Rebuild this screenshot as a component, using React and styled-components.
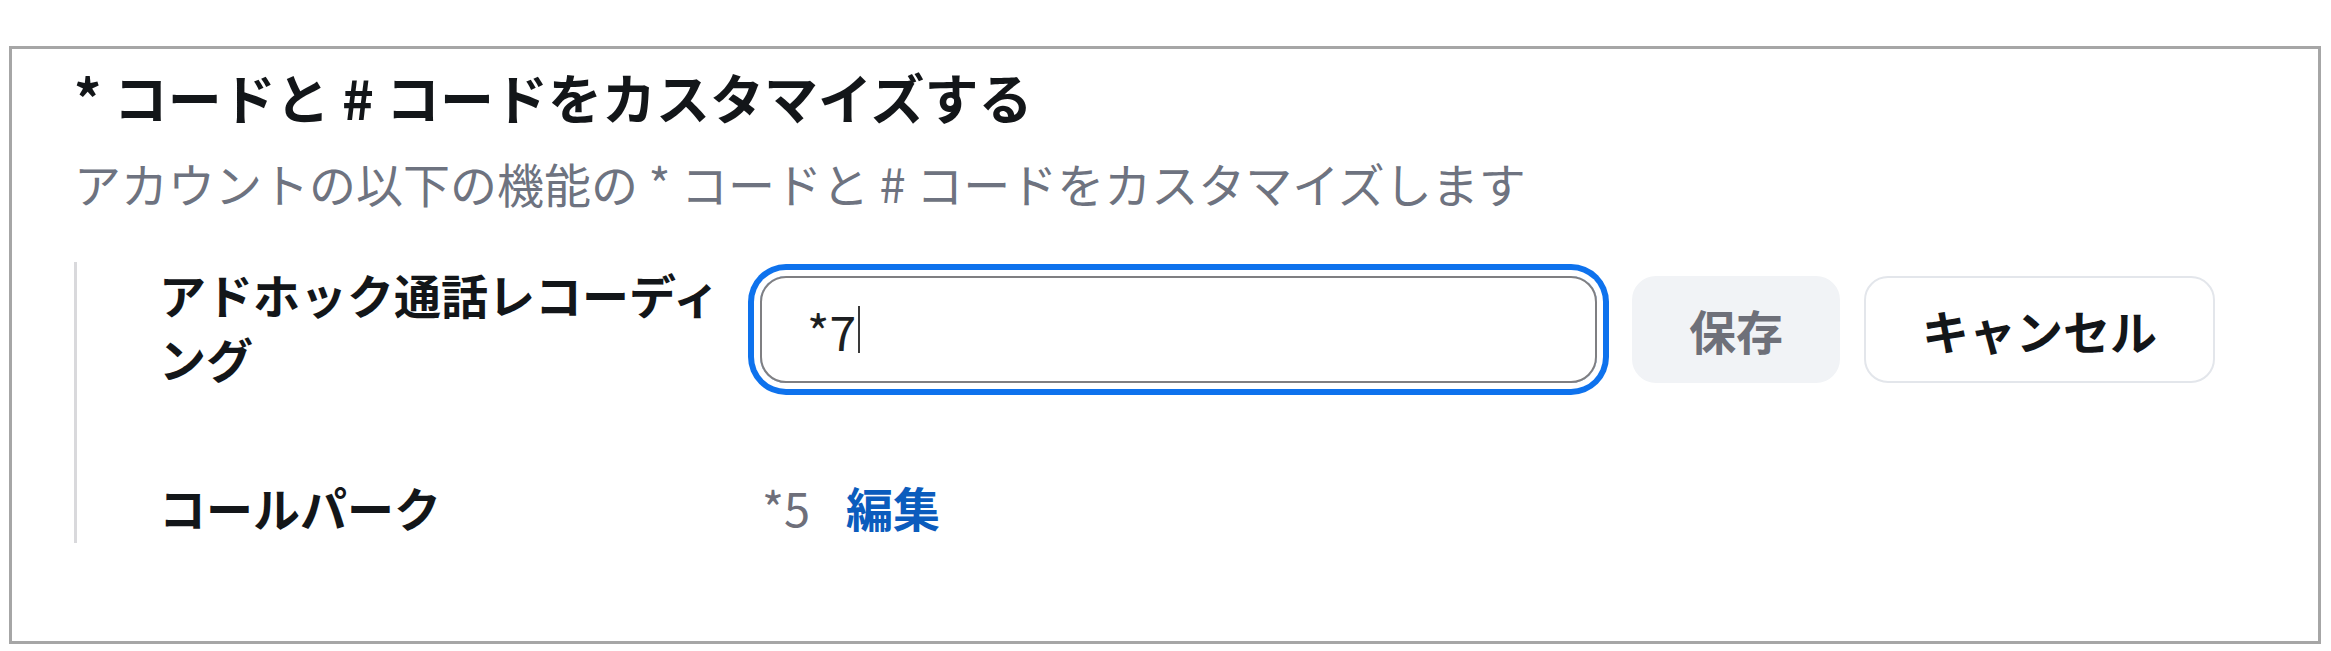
import React from "react";
import styled, { createGlobalStyle } from "styled-components";

const GlobalStyle = createGlobalStyle`
  html, body {
    margin: 0;
    padding: 0;
    background: #ffffff;
  }
  body {
    font-family: "Noto Sans CJK JP", "Noto Sans", sans-serif;
    color: #131619;
  }
`;

const codes = [
  { id: "adhoc", label: "アドホック通話レコーディング", value: "*7", editing: true },
  { id: "park", label: "コールパーク", value: "*5", editing: false },
];

const Frame = styled.div`
  margin: 46px 10px 7px 9px;
  border: 3px solid #a6a6a6;
  padding: 12px 0 98px 62px;
`;

const Title = styled.h2`
  margin: 0;
  font-size: 54px;
  line-height: 72px;
  font-weight: 700;
  color: #131619;
`;

const Subtitle = styled.p`
  margin: 18px 0 0;
  font-size: 47px;
  line-height: 64px;
  font-weight: 400;
  color: #6e7380;
`;

const Rows = styled.div`
  margin-top: 47px;
  border-left: 3px solid #d9d9dc;
  padding: 0 0 4px 82px;
  display: flex;
  flex-direction: column;
  gap: 85px;
`;

const Row = styled.div`
  display: flex;
  align-items: flex-start;
  gap: 21px;
`;

const Label = styled.div`
  width: 580px;
  flex-shrink: 0;
  font-size: 47px;
  line-height: 64px;
  font-weight: 700;
  color: #131619;
`;

const Editor = styled.div`
  margin-top: 14px;
  display: flex;
  align-items: center;
`;

const Field = styled.div`
  box-sizing: border-box;
  width: 837px;
  height: 107px;
  border: 2px solid #7f7f82;
  border-radius: 26px;
  padding-left: 45px;
  display: flex;
  align-items: center;
  font-size: 48px;
  color: #1d1f22;
  box-shadow: 0 0 0 6px #ffffff, 0 0 0 12px #0e72ed;
`;

const Caret = styled.span`
  display: inline-block;
  width: 2px;
  height: 47px;
  margin-left: 2px;
  background: #3a3a3a;
`;

const Button = styled.button`
  box-sizing: border-box;
  height: 107px;
  padding: 0 ${(p) => (p.$primary ? "55px" : "56px")};
  border-radius: 24px;
  font-family: inherit;
  font-size: 47px;
  font-weight: 700;
  margin-left: ${(p) => (p.$primary ? "35px" : "24px")};
  border: 2px solid ${(p) => (p.$primary ? "#f1f3f6" : "#e3e6eb")};
  background: ${(p) => (p.$primary ? "#f1f3f6" : "#ffffff")};
  color: ${(p) => (p.$primary ? "#6e7079" : "#131619")};
  cursor: pointer;
`;

const Value = styled.div`
  display: flex;
  align-items: center;
  gap: 36px;
  font-size: 47px;
  line-height: 64px;
  padding-left: 2px;
`;

const Code = styled.span`
  color: #6e6f7a;
`;

const EditLink = styled.a`
  color: #0b5cbd;
  font-weight: 700;
  text-decoration: none;
  cursor: pointer;
`;

function CodeRow({ label, value, editing }) {
  return (
    <Row>
      <Label>{label}</Label>
      {editing ? (
        <Editor>
          <Field>
            {value}
            <Caret />
          </Field>
          <Button $primary>保存</Button>
          <Button>キャンセル</Button>
        </Editor>
      ) : (
        <Value>
          <Code>{value}</Code>
          <EditLink>編集</EditLink>
        </Value>
      )}
    </Row>
  );
}

export default function App() {
  return (
    <>
      <GlobalStyle />
      <Frame>
        <Title>* コードと # コードをカスタマイズする</Title>
        <Subtitle>アカウントの以下の機能の * コードと # コードをカスタマイズします</Subtitle>
        <Rows>
          {codes.map((c) => (
            <CodeRow key={c.id} {...c} />
          ))}
        </Rows>
      </Frame>
    </>
  );
}
